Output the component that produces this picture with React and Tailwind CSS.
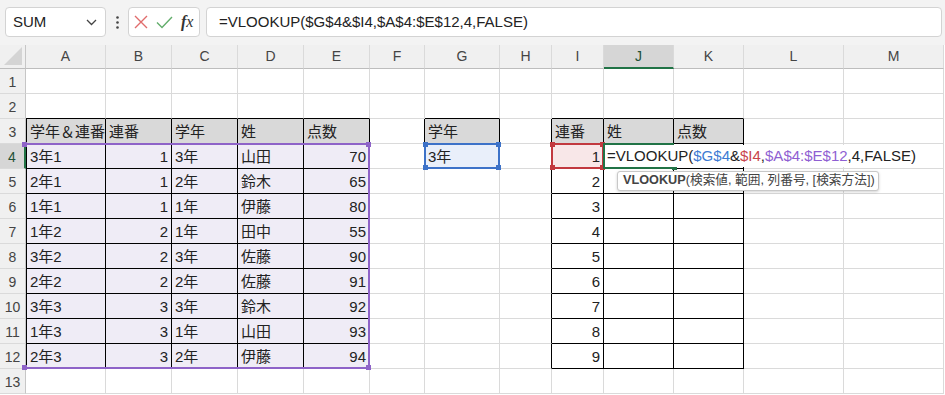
import React from 'react';

const FONT = { fontFamily: "'Liberation Sans', 'Noto Sans CJK JP', sans-serif" };

const COLS = ['A', 'B', 'C', 'D', 'E', 'F', 'G', 'H', 'I', 'J', 'K', 'L', 'M'];

const ROWS = [
  ['3年1', 1, '3年', '山田', 70],
  ['2年1', 1, '2年', '鈴木', 65],
  ['1年1', 1, '1年', '伊藤', 80],
  ['1年2', 2, '1年', '田中', 55],
  ['3年2', 2, '3年', '佐藤', 90],
  ['2年2', 2, '2年', '佐藤', 91],
  ['3年3', 3, '3年', '鈴木', 92],
  ['1年3', 3, '1年', '山田', 93],
  ['2年3', 3, '2年', '伊藤', 94],
];

// bordered ranges: [firstCol, lastCol, firstRow, lastRow]
const TABLES = [
  [1, 5, 3, 12],
  [7, 7, 3, 4],
  [9, 11, 3, 12],
];

const inTable = (c, r) =>
  TABLES.some(([c0, c1, r0, r1]) => c >= c0 && c <= c1 && r >= r0 && r <= r1);

function getCell(c, r) {
  if (r === 3) {
    const heads = { 1: '学年＆連番', 2: '連番', 3: '学年', 4: '姓', 5: '点数', 7: '学年', 9: '連番', 10: '姓', 11: '点数' };
    if (heads[c]) return { text: heads[c], kind: 'head' };
  }
  if (r >= 4 && r <= 12 && c >= 1 && c <= 5) {
    const v = ROWS[r - 4][c - 1];
    return { text: v, right: c === 2 || c === 5, kind: 'range' };
  }
  if (c === 7 && r === 4) return { text: '3年', kind: 'blue' };
  if (c === 9 && r >= 4 && r <= 12) return { text: r - 3, right: true, kind: r === 4 ? 'red' : 'plain' };
  return { text: '', kind: 'plain' };
}

const BG = {
  head: 'bg-[#d9d9d9]',
  range: 'bg-[#efecf6]',
  blue: 'bg-[#e9effa]',
  red: 'bg-[#f8e7e8]',
  plain: 'bg-white',
};

function Cell({ c, r }) {
  const cell = getCell(c, r);
  const rightCls = inTable(c, r) || inTable(c + 1, r) ? 'border-r-black' : 'border-r-[#dadada]';
  const bottomCls = inTable(c, r) || inTable(c, r + 1) ? 'border-b-black' : 'border-b-[#dadada]';
  const leftCls = c === 1 && inTable(c, r) ? 'border-l border-l-black' : '';
  return (
    <div
      className={`flex items-center overflow-hidden whitespace-nowrap border-r border-b pt-[2px] text-[15px] text-[#222] ${rightCls} ${bottomCls} ${leftCls} ${BG[cell.kind]} ${
        cell.right ? 'justify-end pr-[3px]' : 'justify-start pl-[3px]'
      }`}
    >
      {cell.text}
    </div>
  );
}

function ColHeader({ label }) {
  if (label === 'J') {
    return (
      <div className="flex items-center justify-center border-r border-r-[#dadada] border-b-2 border-b-[#217346] bg-[#d6d6d6] text-[14px] text-[#1f5136]">
        {label}
      </div>
    );
  }
  return (
    <div className="flex items-center justify-center border-r border-r-[#dadada] border-b border-b-[#bdbdbd] bg-[#f0f0f0] text-[14px] text-[#444]">
      {label}
    </div>
  );
}

function RowHeader({ n }) {
  if (n === 4) {
    return (
      <div className="flex items-center justify-center border-r-2 border-r-[#217346] border-b border-b-[#dadada] bg-[#d6d6d6] pt-[2px] text-[14px] text-[#1f5136]">
        {n}
      </div>
    );
  }
  return (
    <div className="flex items-center justify-center border-r border-r-[#c6c6c6] border-b border-b-[#dadada] bg-[#f0f0f0] pt-[2px] text-[14px] text-[#444]">
      {n}
    </div>
  );
}

// the little squares on the corners of a reference frame
function Handles({ color, hide = [] }) {
  const sq = (k) => <i className={`block h-[5px] w-[5px] ${hide.includes(k) ? '' : color}`} />;
  return (
    <div className="absolute -inset-[3px] flex flex-col justify-between">
      <div className="flex justify-between">
        {sq('tl')}
        {sq('tr')}
      </div>
      <div className="flex justify-between">
        {sq('bl')}
        {sq('br')}
      </div>
    </div>
  );
}

function Toolbar() {
  return (
    <div className="flex h-[45px] items-start bg-[#f3f3f3] pl-[5px] pr-[3px] pt-[7px]">
      <div className="flex h-[30px] w-[101px] items-center justify-between rounded-[4px] border border-[#d3d3d3] bg-white pl-[7px] pr-[8px] text-[15px] text-[#222]">
        <span>SUM</span>
        <svg width="11" height="7" viewBox="0 0 11 7" fill="none">
          <path d="M1 1l4.5 4.5L10 1" stroke="#444" strokeWidth="1.3" />
        </svg>
      </div>
      <div className="flex h-[30px] w-[22px] items-center justify-center">
        <svg width="3" height="13" viewBox="0 0 3 13">
          <circle cx="1.5" cy="1.5" r="1.3" fill="#444" />
          <circle cx="1.5" cy="6.5" r="1.3" fill="#444" />
          <circle cx="1.5" cy="11.5" r="1.3" fill="#444" />
        </svg>
      </div>
      <div className="flex h-[30px] w-[72px] items-center gap-[8px] rounded-[4px] border border-[#d3d3d3] bg-white pl-[5px]">
        <svg width="14" height="14" viewBox="0 0 14 14" fill="none">
          <path d="M1 1l12 12M13 1L1 13" stroke="#e06c6c" strokeWidth="1.4" />
        </svg>
        <svg width="17" height="13" viewBox="0 0 17 13" fill="none">
          <path d="M1 6.5l5 5L16 1" stroke="#62ad6b" strokeWidth="1.4" />
        </svg>
        <span className="text-[16px] italic text-[#333]" style={{ fontFamily: "'Liberation Serif', serif" }}>
          <b>f</b>x
        </span>
      </div>
      <div className="ml-[6px] flex h-[30px] flex-1 items-center rounded-[4px] border border-[#d3d3d3] bg-white pl-[12px] text-[15px] text-[#222]">
        =VLOOKUP($G$4&$I4,$A$4:$E$12,4,FALSE)
      </div>
    </div>
  );
}

export default function App() {
  return (
    <div className="h-[395px] w-[945px] overflow-hidden bg-white" style={FONT}>
      <Toolbar />
      <div className="relative">
        <div className="grid grid-cols-[26px_80px_66px_66px_66px_66px_55px_75px_52px_52px_70px_70px_100px_100px] grid-rows-[24px_repeat(13,25px)]">
          {/* select-all corner */}
          <div className="flex items-end justify-end border-r border-r-[#c6c6c6] border-b border-b-[#bdbdbd] bg-[#f0f0f0] p-[3px]">
            <svg width="18" height="18" viewBox="0 0 18 18">
              <path d="M18 0V18H0Z" fill="#d4d4d4" />
            </svg>
          </div>
          {COLS.map((l) => (
            <ColHeader key={l} label={l} />
          ))}
          {Array.from({ length: 13 }, (_, i) => i + 1).map((r) => (
            <React.Fragment key={r}>
              <RowHeader n={r} />
              {COLS.map((_, ci) => (
                <Cell key={ci} c={ci + 1} r={r} />
              ))}
            </React.Fragment>
          ))}
        </div>

        {/* reference frame A4:E12 */}
        <div className="pointer-events-none absolute left-[25px] top-[98px] h-[226px] w-[345px] border-t-2 border-r-2 border-b-2 border-[#8e63c8]">
          <Handles color="bg-[#8e63c8]" />
        </div>

        {/* reference frame G4 */}
        <div className="pointer-events-none absolute left-[424px] top-[98px] h-[26px] w-[76px] border-2 border-[#3d72c8]">
          <Handles color="bg-[#3d72c8]" />
        </div>

        {/* reference frame I4 */}
        <div className="pointer-events-none absolute left-[551px] top-[98px] h-[26px] w-[53px] border-2 border-[#c2393f]">
          <Handles color="bg-[#c2393f]" />
        </div>

        {/* active cell J4 in edit mode */}
        <div className="absolute left-[603px] top-[98px] flex h-[26px] items-center">
          <div className="relative h-[26px] w-[71px] border-l-2 border-t-2 border-b-2 border-[#217346]">
            <Handles color="bg-[#217346]" hide={['tl', 'tr', 'bl']} />
          </div>
          <div className="absolute left-[2px] flex h-[22px] w-[318px] items-center whitespace-nowrap bg-white pl-[2px] pt-[1px] text-[15px] text-[#222]">
            =VLOOKUP(<span className="text-[#3d7bd3]">$G$4</span>&amp;<span className="text-[#c8454c]">$I4</span>,
            <span className="text-[#8f5fd2]">$A$4:$E$12</span>,4,FALSE)
          </div>
        </div>

        {/* function tooltip */}
        <div className="absolute left-[617px] top-[126px] flex h-[20px] w-[262px] items-center whitespace-nowrap rounded-[3px] border border-[#c8c8c8] bg-white pl-[5px] text-[12.7px] text-[#444] shadow-[0_1px_3px_rgba(0,0,0,0.18)]">
          <b>VLOOKUP</b>(検索値, 範囲, 列番号, [検索方法])
        </div>
      </div>
    </div>
  );
}
